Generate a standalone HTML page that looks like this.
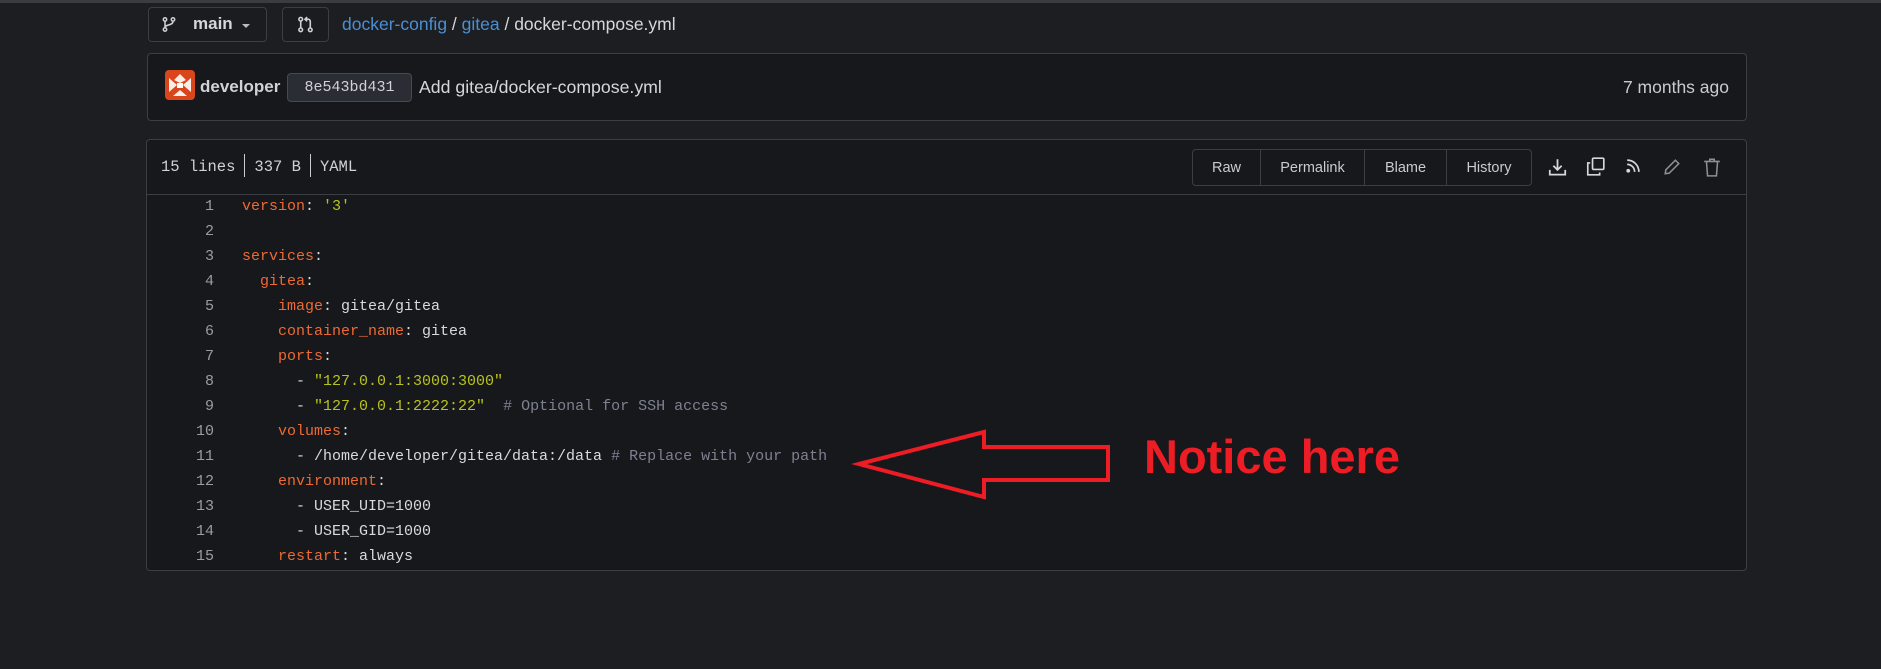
<!DOCTYPE html>
<html><head><meta charset="utf-8"><style>
*{margin:0;padding:0;box-sizing:border-box}
body{width:1881px;height:669px;background:#1c1e22;position:relative;overflow:hidden;font-family:"Liberation Sans",sans-serif;color:#d5d7da}
.a{position:absolute;white-space:nowrap}
.box{position:absolute;border:1px solid #3b3e44;border-radius:4px;background:#16181b}
.btn{position:absolute;border:1px solid #3b3e44;border-radius:4px;background:#1a1c20}
.mono{font-family:"Liberation Mono","DejaVu Sans Mono",monospace}
.ln{position:absolute;width:70px;text-align:right;left:144px;color:#9a9da3;font-size:15px}
.cd{position:absolute;left:242px;font-size:15px;white-space:pre;color:#d9dadc}
.k{color:#ee6a35}.s{color:#b9c21c}.c{color:#7d8291}
.bt{position:absolute;top:0;height:35px;line-height:36px;font-size:14.5px;color:#c9cbcf;text-align:center;border-right:1px solid #3b3e44}
</style></head><body>
<div class="a" style="left:0;top:0;width:1881px;height:3px;background:#3b3c40"></div>

<div class="btn" style="left:148px;top:7px;width:119px;height:35px"></div>
<svg class="a" style="left:161px;top:16px" width="16" height="17" viewBox="0 0 16 16" fill="none" stroke="#cfd1d4" stroke-width="1.5"><circle cx="4" cy="3" r="1.7"/><circle cx="12" cy="3" r="1.7"/><circle cx="4" cy="13" r="1.7"/><path d="M4 5v6M12 5c0 4-8 3-8 6"/></svg>
<div class="a" style="left:193px;top:14px;font-size:17px;font-weight:bold;color:#d5d7da">main</div>
<div class="a" style="left:242px;top:24px;border:4px solid transparent;border-top:4px solid #bbb"></div>

<div class="btn" style="left:282px;top:7px;width:47px;height:35px"></div>
<svg class="a" style="left:297px;top:16px" width="17" height="17" viewBox="0 0 16 16" fill="none" stroke="#cfd1d4" stroke-width="1.5"><circle cx="3.5" cy="3" r="1.7"/><circle cx="3.5" cy="13" r="1.7"/><circle cx="12.5" cy="13" r="1.7"/><path d="M3.5 5v6M12.5 11V5c0-1-1-2-2-2H8M9.5 1 7.5 3l2 2"/></svg>
<div class="a" style="left:342px;top:14px;font-size:17.5px;color:#d5d7da"><span style="color:#4a8fd6">docker-config</span> / <span style="color:#4a8fd6">gitea</span> / docker-compose.yml</div>

<div class="box" style="left:147px;top:53px;width:1600px;height:68px"></div>
<svg class="a" style="left:165px;top:70px" width="30" height="30" viewBox="0 0 30 30"><rect width="30" height="30" rx="4" fill="#d9461b"/><path d="M15 4 9 10 15 13 21 10Z M4 8l8 7-8 7M26 8l-8 7 8 7M8 26l7-6 7 6" fill="#fff" opacity=".9"/><rect x="12" y="13" width="6" height="5" fill="#fff"/></svg>
<div class="a" style="left:200px;top:77px;font-size:17px;font-weight:bold;color:#d0d2d5">developer</div>
<div class="a mono" style="left:287px;top:73px;width:125px;height:29px;background:#2a2d33;border:1px solid #454950;border-radius:4px;font-size:15px;line-height:27px;text-align:center;color:#d0d2d5">8e543bd431</div>
<div class="a" style="left:419px;top:77px;font-size:17.7px;color:#d5d7da">Add gitea/docker-compose.yml</div>
<div class="a" style="left:1600px;top:77px;width:129px;text-align:right;font-size:17.5px;color:#c9cbcf">7 months ago</div>

<div class="box" style="left:146px;top:139px;width:1601px;height:432px"></div>
<div class="a" style="left:147px;top:194px;width:1599px;height:1px;background:#3b3e44"></div>
<div class="a mono" style="left:161px;top:154px;font-size:15.5px;color:#d0d2d5">15 lines<span style="display:inline-block;width:1px;height:23px;background:#ccc;margin:0 9px;vertical-align:-6px"></span>337 B<span style="display:inline-block;width:1px;height:23px;background:#ccc;margin:0 9px;vertical-align:-6px"></span>YAML</div>

<div class="btn" style="left:1192px;top:149px;width:340px;height:37px;background:#16181b">
<div class="bt" style="left:0;width:68px">Raw</div>
<div class="bt" style="left:68px;width:104px">Permalink</div>
<div class="bt" style="left:172px;width:82px">Blame</div>
<div class="bt" style="left:254px;width:84px;border:none">History</div>
</div>
<svg class="a" style="left:1548px;top:158px" width="19" height="19" viewBox="0 0 16 16" fill="none" stroke="#d5d7da" stroke-width="1.5"><path d="M8 1v9M4.5 6.5 8 10l3.5-3.5M1.5 10v4h13v-4"/></svg>
<svg class="a" style="left:1586px;top:157px" width="19" height="19" viewBox="0 0 16 16" fill="none" stroke="#d5d7da" stroke-width="1.4"><rect x="5.5" y="1" width="9.5" height="9.5" rx="1"/><path d="M3.5 5H1.5v10h10v-2"/></svg>
<svg class="a" style="left:1624px;top:158px" width="17" height="17" viewBox="0 0 16 16" fill="none" stroke="#d5d7da" stroke-width="1.6"><path d="M3 6a7 7 0 0 1 7 7M3 2a11 11 0 0 1 11 11"/><circle cx="4" cy="12" r="1" fill="#d5d7da"/></svg>
<svg class="a" style="left:1663px;top:158px" width="18" height="18" viewBox="0 0 16 16" fill="none" stroke="#8c8f95" stroke-width="1.4"><path d="M11 2l3 3-8.5 8.5L2 14l.5-3.5Z"/></svg>
<svg class="a" style="left:1703px;top:157px" width="18" height="20" viewBox="0 0 16 18" fill="none" stroke="#8c8f95" stroke-width="1.4"><path d="M1 4h14M6 4V2h4v2M3 4l1 13h8l1-13"/></svg>

<div class="ln mono" style="top:198px">1</div><div class="cd mono" style="top:198px"><span class="k">version</span>: <span class="s">'3'</span></div>
<div class="ln mono" style="top:223px">2</div>
<div class="ln mono" style="top:248px">3</div><div class="cd mono" style="top:248px"><span class="k">services</span>:</div>
<div class="ln mono" style="top:273px">4</div><div class="cd mono" style="top:273px">  <span class="k">gitea</span>:</div>
<div class="ln mono" style="top:298px">5</div><div class="cd mono" style="top:298px">    <span class="k">image</span>: gitea/gitea</div>
<div class="ln mono" style="top:323px">6</div><div class="cd mono" style="top:323px">    <span class="k">container_name</span>: gitea</div>
<div class="ln mono" style="top:348px">7</div><div class="cd mono" style="top:348px">    <span class="k">ports</span>:</div>
<div class="ln mono" style="top:373px">8</div><div class="cd mono" style="top:373px">      - <span class="s">"127.0.0.1:3000:3000"</span></div>
<div class="ln mono" style="top:398px">9</div><div class="cd mono" style="top:398px">      - <span class="s">"127.0.0.1:2222:22"</span>  <span class="c"># Optional for SSH access</span></div>
<div class="ln mono" style="top:423px">10</div><div class="cd mono" style="top:423px">    <span class="k">volumes</span>:</div>
<div class="ln mono" style="top:448px">11</div><div class="cd mono" style="top:448px">      - /home/developer/gitea/data:/data <span class="c"># Replace with your path</span></div>
<div class="ln mono" style="top:473px">12</div><div class="cd mono" style="top:473px">    <span class="k">environment</span>:</div>
<div class="ln mono" style="top:498px">13</div><div class="cd mono" style="top:498px">      - USER_UID=1000</div>
<div class="ln mono" style="top:523px">14</div><div class="cd mono" style="top:523px">      - USER_GID=1000</div>
<div class="ln mono" style="top:548px">15</div><div class="cd mono" style="top:548px">    <span class="k">restart</span>: always</div>

<svg class="a" style="left:0;top:0" width="1881" height="669"><path d="M859 464 L984 432 L984 447 L1108 447 L1108 480 L984 480 L984 497 Z" fill="none" stroke="#ee1c25" stroke-width="4" stroke-linejoin="miter"/></svg>
<div class="a" style="left:1144px;top:429px;font-family:'Liberation Sans',sans-serif;font-weight:bold;font-size:47px;color:#ee1c25">Notice here</div>
</body></html>
